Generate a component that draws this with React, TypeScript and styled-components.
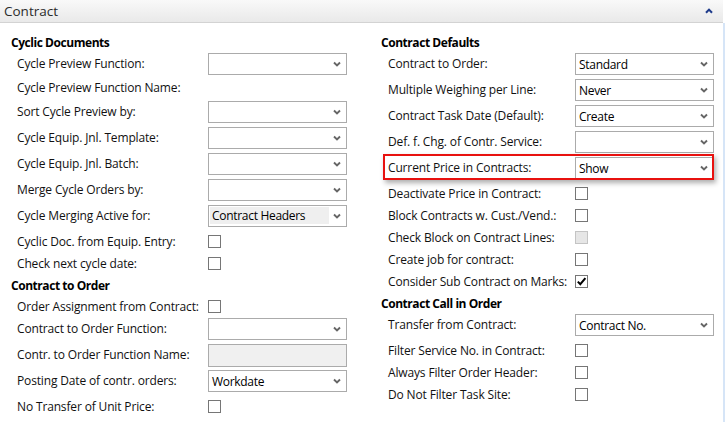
import React from "react";
import styled, { createGlobalStyle } from "styled-components";

const GlobalStyle = createGlobalStyle`
  html, body { margin: 0; padding: 0; background: #ffffff; }
  body {
    font-family: "Open Sans", "Noto Sans", "Liberation Sans", sans-serif;
    color: #111;
  }
  * { box-sizing: border-box; }
`;

const Panel = styled.div`
  width: 726px;
  height: 422px;
  overflow: hidden;
  background: #fff;
`;

const Header = styled.div`
  width: 723px;
  height: 23px;
  display: flex;
  align-items: center;
  justify-content: space-between;
  padding: 0 10px 1px 4px;
  background: linear-gradient(#f9f9f9, #e9e9e9);
  border-bottom: 1px solid #d3d3d3;
`;

const HeaderTitle = styled.span`
  font-size: 13.5px;
  color: #2b2b2b;
  line-height: 16px;
`;

const Body = styled.div`
  width: 725px;
  height: 399px;
  display: flex;
  gap: 34px;
  padding: 7px 0 0 11px;
  border-right: 2px solid #d6e5f7;
`;

const Column = styled.div<{ $w: number }>`
  width: ${(p) => p.$w}px;
  display: flex;
  flex-direction: column;
`;

const Heading = styled.div`
  padding-top: 5px;
  line-height: 16px;
  height: 21px;
  font-size: 12px;
  font-weight: 700;
  letter-spacing: -0.45px;
  color: #000;
  white-space: nowrap;
`;

type Kind = "select" | "check" | "label";

const Row = styled.div<{ $kind: Kind; $indent: number }>`
  position: relative;
  display: flex;
  align-items: center;
  height: ${(p) => (p.$kind === "select" ? 26 : 22)}px;
  padding-top: ${(p) => (p.$kind === "check" ? 3 : 0)}px;
  padding-left: ${(p) => p.$indent}px;
`;

const Label = styled.span<{ $w: number }>`
  width: ${(p) => p.$w}px;
  flex: none;
  font-size: 12px;
  line-height: 16px;
  letter-spacing: -0.15px;
  color: #111;
  white-space: nowrap;
`;

const SelectBox = styled.div`
  width: 139px;
  height: 22px;
  display: flex;
  align-items: stretch;
  border: 1px solid #ababab;
  background: #fff;
`;

const SelectValue = styled.span<{ $filled?: boolean }>`
  flex: 1;
  display: flex;
  align-items: center;
  margin: ${(p) => (p.$filled ? "1px 0 2px 1px" : "0")};
  padding-left: ${(p) => (p.$filled ? 2 : 3)}px;
  background: ${(p) => (p.$filled ? "#efefef" : "transparent")};
  font-size: 12px;
  letter-spacing: -0.3px;
  color: #000;
  white-space: nowrap;
`;

const Arrow = styled.span`
  width: 17px;
  flex: none;
  display: flex;
  align-items: center;
  justify-content: center;
  padding-right: 1px;
`;

const TextBox = styled.div<{ $disabled?: boolean }>`
  width: 139px;
  height: 23px;
  border: 1px solid #ababab;
  background: ${(p) => (p.$disabled ? "#f0f0f0" : "#fff")};
`;

const Check = styled.span<{ $disabled?: boolean }>`
  width: 13px;
  height: 13px;
  flex: none;
  display: flex;
  align-items: center;
  justify-content: center;
  border: 1px solid ${(p) => (p.$disabled ? "#c4c4c4" : "#767676")};
  background: ${(p) => (p.$disabled ? "#e6e6e6" : "#fff")};
`;

const Highlight = styled.span`
  position: absolute;
  top: -1px;
  left: 2px;
  right: 0;
  height: 26px;
  border: 2px solid #e8110f;
  box-shadow: 2px 3px 5px rgba(0, 0, 0, 0.32);
  pointer-events: none;
  z-index: 1;
`;

const Chevron = () => (
  <svg width="8" height="6" viewBox="0 0 8 6">
    <polyline
      points="1,1.5 4,4.5 7,1.5"
      fill="none"
      stroke="#666"
      strokeWidth="1.9"
    />
  </svg>
);

const CaretUp = () => (
  <svg width="8" height="6" viewBox="0 0 8 6">
    <polyline
      points="1,4.8 4,1.6 7,4.8"
      fill="none"
      stroke="#1d3a8a"
      strokeWidth="2"
    />
  </svg>
);

const CheckMark = () => (
  <svg width="11" height="11" viewBox="0 0 11 11">
    <polyline
      points="1.8,5.6 4.3,8.2 9.4,2.2"
      fill="none"
      stroke="#000"
      strokeWidth="2"
    />
  </svg>
);

type Field =
  | { type: "select"; label: string; value?: string; filled?: boolean; highlight?: boolean }
  | { type: "check"; label: string; checked?: boolean; disabled?: boolean }
  | { type: "label"; label: string }
  | { type: "text"; label: string; disabled?: boolean };

type Section = { title: string; fields: Field[] };

const leftSections: Section[] = [
  {
    title: "Cyclic Documents",
    fields: [
      { type: "select", label: "Cycle Preview Function:" },
      { type: "label", label: "Cycle Preview Function Name:" },
      { type: "select", label: "Sort Cycle Preview by:" },
      { type: "select", label: "Cycle Equip. Jnl. Template:" },
      { type: "select", label: "Cycle Equip. Jnl. Batch:" },
      { type: "select", label: "Merge Cycle Orders by:" },
      { type: "select", label: "Cycle Merging Active for:", value: "Contract Headers", filled: true },
      { type: "check", label: "Cyclic Doc. from Equip. Entry:" },
      { type: "check", label: "Check next cycle date:" },
    ],
  },
  {
    title: "Contract to Order",
    fields: [
      { type: "check", label: "Order Assignment from Contract:" },
      { type: "select", label: "Contract to Order Function:" },
      { type: "text", label: "Contr. to Order Function Name:", disabled: true },
      { type: "select", label: "Posting Date of contr. orders:", value: "Workdate" },
      { type: "check", label: "No Transfer of Unit Price:" },
    ],
  },
];

const rightSections: Section[] = [
  {
    title: "Contract Defaults",
    fields: [
      { type: "select", label: "Contract to Order:", value: "Standard" },
      { type: "select", label: "Multiple Weighing per Line:", value: "Never" },
      { type: "select", label: "Contract Task Date (Default):", value: "Create" },
      { type: "select", label: "Def. f. Chg. of Contr. Service:" },
      { type: "select", label: "Current Price in Contracts:", value: "Show", highlight: true },
      { type: "check", label: "Deactivate Price in Contract:" },
      { type: "check", label: "Block Contracts w. Cust./Vend.:" },
      { type: "check", label: "Check Block on Contract Lines:", disabled: true },
      { type: "check", label: "Create job for contract:" },
      { type: "check", label: "Consider Sub Contract on Marks:", checked: true },
    ],
  },
  {
    title: "Contract Call in Order",
    fields: [
      { type: "select", label: "Transfer from Contract:", value: "Contract No." },
      { type: "check", label: "Filter Service No. in Contract:" },
      { type: "check", label: "Always Filter Order Header:" },
      { type: "check", label: "Do Not Filter Task Site:" },
    ],
  },
];

const FieldRow: React.FC<{ field: Field; indent: number; labelW: number }> = ({
  field,
  indent,
  labelW,
}) => {
  const kind: Kind =
    field.type === "check" ? "check" : field.type === "label" ? "label" : "select";
  return (
    <Row $kind={kind} $indent={indent}>
      <Label $w={labelW}>{field.label}</Label>
      {field.type === "select" && (
        <SelectBox>
          <SelectValue $filled={field.filled}>{field.value ?? ""}</SelectValue>
          <Arrow>
            <Chevron />
          </Arrow>
        </SelectBox>
      )}
      {field.type === "text" && <TextBox $disabled={field.disabled} />}
      {field.type === "check" && (
        <Check $disabled={field.disabled}>{field.checked && <CheckMark />}</Check>
      )}
      {field.type === "select" && field.highlight && <Highlight />}
    </Row>
  );
};

const SectionBlock: React.FC<{ section: Section; indent: number; labelW: number }> = ({
  section,
  indent,
  labelW,
}) => (
  <>
    <Heading>{section.title}</Heading>
    {section.fields.map((f) => (
      <FieldRow key={f.label} field={f} indent={indent} labelW={labelW} />
    ))}
  </>
);

export default function App() {
  return (
    <>
      <GlobalStyle />
      <Panel>
        <Header>
          <HeaderTitle>Contract</HeaderTitle>
          <CaretUp />
        </Header>
        <Body>
          <Column $w={336}>
            {leftSections.map((s) => (
              <SectionBlock key={s.title} section={s} indent={6} labelW={191} />
            ))}
          </Column>
          <Column $w={333}>
            {rightSections.map((s) => (
              <SectionBlock key={s.title} section={s} indent={7} labelW={187} />
            ))}
          </Column>
        </Body>
      </Panel>
    </>
  );
}
